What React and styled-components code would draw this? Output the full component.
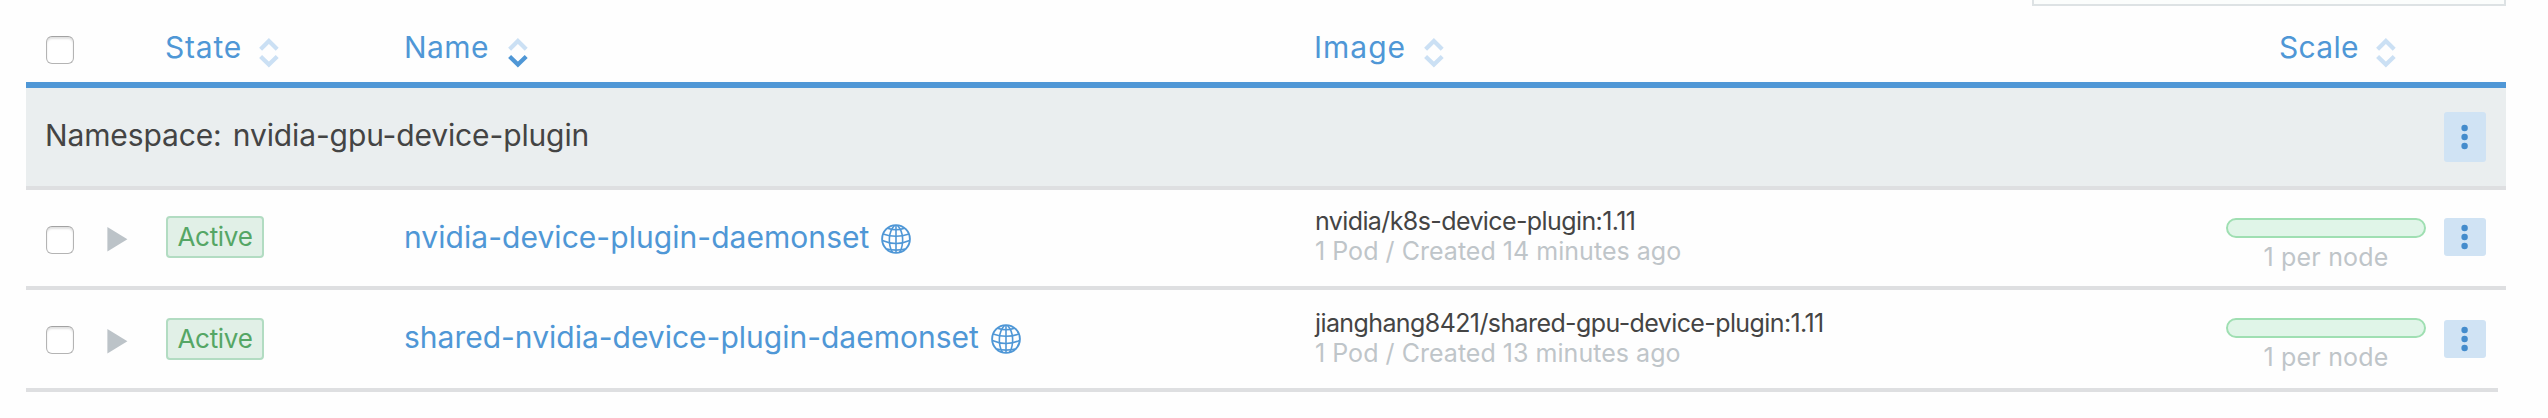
import React from 'react';
import styled, { createGlobalStyle } from 'styled-components';

const c = {
  blue: '#4f97d6',
  paleBlue: '#cbe0f4',
  text: '#444444',
  muted: '#bfc5c9',
  line: '#dedfe1',
};

const GlobalStyle = createGlobalStyle`
  * { box-sizing: border-box; }
  body {
    margin: 0;
    background: #fefefe;
    color: ${c.text};
    font-family: Inter, "Noto Sans", sans-serif;
    font-weight: 400;
    font-size: 30px;
    line-height: 40px;
  }
`;

const Page = styled.main`
  display: flex;
  flex-direction: column;
  width: 2506px;
  height: 418px;
  padding-left: 26px;
  overflow: hidden;
`;

const SearchBox = styled.div`
  align-self: flex-end;
  width: 474px;
  height: 6px;
  border: 2px solid #dde2e4;
  border-top: 0;
  background: #fbfdfc;
`;

const Row = styled.div`
  display: grid;
  grid-template-columns: 61px 59px 240px 910px 910px 200px 1fr;
  align-items: start;
  height: ${(p) => p.$height}px;
  margin-right: ${(p) => p.$inset || 0}px;
  padding-left: 20px;
  border-bottom: 4px solid ${c.line};
`;

const HeaderRow = styled(Row)`
  border-bottom: 6px solid ${c.blue};
`;

const GroupRow = styled.div`
  display: flex;
  justify-content: space-between;
  align-items: flex-start;
  height: 102px;
  padding: 0 20px;
  background: #eaeeef;
  border-bottom: 4px solid ${c.line};
`;

const Cell = styled.div`
  display: flex;
  align-items: flex-start;
  padding-top: ${(p) => p.$top}px;
  white-space: nowrap;
`;

const StackCell = styled(Cell)`
  flex-direction: column;
`;

const ImageCell = styled(StackCell)`
  margin-left: -1px;
`;

const ScaleCell = styled(StackCell)`
  align-items: center;
`;

const ActionCell = styled(Cell)`
  padding-left: 18px;
`;

const HeadLabel = styled.span`
  color: ${c.blue};
  letter-spacing: ${(p) => p.$track}px;
  width: ${(p) => p.$width}px;
  margin-left: ${(p) => p.$indent || 0}px;
`;

const GroupLabel = styled.span`
  margin: 27px 0 0 -1px;
  letter-spacing: -0.13px;
  word-spacing: 3px;
`;

const Checkbox = styled.input.attrs({ type: 'checkbox' })`
  appearance: none;
  width: 28px;
  height: 28px;
  margin: 0;
  border: 1px solid #b4b4b4;
  border-top-color: #a2a2a2;
  border-radius: 6px;
  background: #fff;
  box-shadow: inset 0 2px 2px rgba(0, 0, 0, 0.12);
`;

const Badge = styled.span`
  width: 98px;
  height: 42px;
  border: 2px solid #b2dcc2;
  border-radius: 4px;
  background: #e1f0e7;
  color: #55a665;
  font-size: 26px;
  line-height: 38px;
  letter-spacing: -0.3px;
  text-align: center;
`;

const NameLink = styled.a`
  color: ${c.blue};
  letter-spacing: ${(p) => p.$track}px;
  width: ${(p) => p.$width}px;
  margin-left: -2px;
`;

const ImageName = styled.span`
  font-size: 25px;
  line-height: 30px;
  letter-spacing: -0.6px;
`;

const Muted = styled.span`
  color: ${c.muted};
  font-size: 25px;
  line-height: 30px;
  letter-spacing: ${(p) => p.$track || 0}px;
`;

const ScaleBar = styled.div`
  width: 200px;
  height: 20px;
  margin-bottom: 4px;
  border: 2px solid #9fdfb2;
  border-radius: 10px;
  background: #e0f5e8;
`;

const ActionButton = styled.button`
  display: flex;
  justify-content: center;
  width: 42px;
  height: ${(p) => p.$height}px;
  padding: ${(p) => p.$pad}px 0 0;
  border: 0;
  border-radius: 3px;
  background: #d0e3f4;
`;

const Icon = styled.svg`
  display: block;
  flex: none;
  margin-top: ${(p) => p.$top || 0}px;
`;

function SortIcon({ descending }) {
  return (
    <Icon width="20" height="30" viewBox="0 0 20 30" fill="none" strokeWidth="4.2" $top={10.5}>
      <path d="M1.6 11.2 L9.9 3 L18.2 11.2" stroke={c.paleBlue} />
      <path d="M1.6 18.4 L9.9 26.6 L18.2 18.4" stroke={descending ? c.blue : c.paleBlue} />
    </Icon>
  );
}

function Globe() {
  return (
    <Icon width="30" height="30" viewBox="0 0 30 30" fill="none" stroke={c.blue} strokeWidth="1.6" $top={6.5}>
      <circle cx="15" cy="15" r="13.9" strokeWidth="1.9" />
      <path d="M15 1V29M13.5 1.5C7 8 7 21 11.5 28.5M16.5 1.5C23 8 23 21 18.5 28.5" />
      <path d="M6.5 4.2Q15 7.2 23.5 4.2M2 10Q15 14.5 28 10M1.4 16.5Q15 22.5 28.6 16.5M5.8 25Q15 27.2 24.2 25" />
    </Icon>
  );
}

function Dots() {
  return (
    <Icon width="8" height="26" viewBox="0 0 8 26" fill="#448ccc">
      <circle cx="3.6" cy="4" r="3.2" />
      <circle cx="3.6" cy="13" r="3.2" />
      <circle cx="3.6" cy="22" r="3.2" />
    </Icon>
  );
}

function Arrow() {
  return (
    <Icon width="21" height="25" viewBox="0 0 21 25" fill="#bcc3c8">
      <path d="M0.4 0L20.4 12.3L0.4 24.6Z" />
    </Icon>
  );
}

const workloads = [
  {
    name: 'nvidia-device-plugin-daemonset',
    width: 477,
    track: 0.05,
    image: 'nvidia/k8s-device-plugin:1.11',
    age: '1 Pod / Created 14 minutes ago',
    height: 100,
    shift: 0,
    inset: 0,
  },
  {
    name: 'shared-nvidia-device-plugin-daemonset',
    width: 587,
    track: 0,
    image: 'jianghang8421/shared-gpu-device-plugin:1.11',
    age: '1 Pod / Created 13 minutes ago',
    height: 102,
    shift: 2,
    inset: 8,
  },
];

function WorkloadRow({ item }) {
  const { shift } = item;
  return (
    <Row $height={item.height} $inset={item.inset}>
      <Cell $top={36}><Checkbox /></Cell>
      <Cell $top={36.5 + shift}><Arrow /></Cell>
      <Cell $top={26 + shift}><Badge>Active</Badge></Cell>
      <Cell $top={27}>
        <NameLink $track={item.track} $width={item.width}>{item.name}</NameLink>
        <Globe />
      </Cell>
      <ImageCell $top={16 + shift}>
        <ImageName>{item.image}</ImageName>
        <Muted $track={0.03}>{item.age}</Muted>
      </ImageCell>
      <ScaleCell $top={28}>
        <ScaleBar />
        <Muted $track={0.2}>1 per node</Muted>
      </ScaleCell>
      <ActionCell $top={28 + shift}>
        <ActionButton $height={38} $pad={5.5}><Dots /></ActionButton>
      </ActionCell>
    </Row>
  );
}

export default function App() {
  return (
    <>
      <GlobalStyle />
      <Page>
        <SearchBox />
        <HeaderRow $height={82}>
          <Cell $top={30}><Checkbox /></Cell>
          <span />
          <Cell $top={21}><HeadLabel $track={0.8} $width={94} $indent={-1}>State</HeadLabel><SortIcon /></Cell>
          <Cell $top={21}><HeadLabel $track={0.4} $width={104} $indent={-2}>Name</HeadLabel><SortIcon descending /></Cell>
          <Cell $top={21}><HeadLabel $track={1} $width={110} $indent={-2}>Image</HeadLabel><SortIcon /></Cell>
          <Cell $top={21}><HeadLabel $track={0.3} $width={97} $indent={53}>Scale</HeadLabel><SortIcon /></Cell>
        </HeaderRow>
        <GroupRow>
          <GroupLabel>Namespace: nvidia-gpu-device-plugin</GroupLabel>
          <Cell $top={24}>
            <ActionButton $height={50} $pad={11.5}><Dots /></ActionButton>
          </Cell>
        </GroupRow>
        {workloads.map((item) => <WorkloadRow key={item.name} item={item} />)}
      </Page>
    </>
  );
}
